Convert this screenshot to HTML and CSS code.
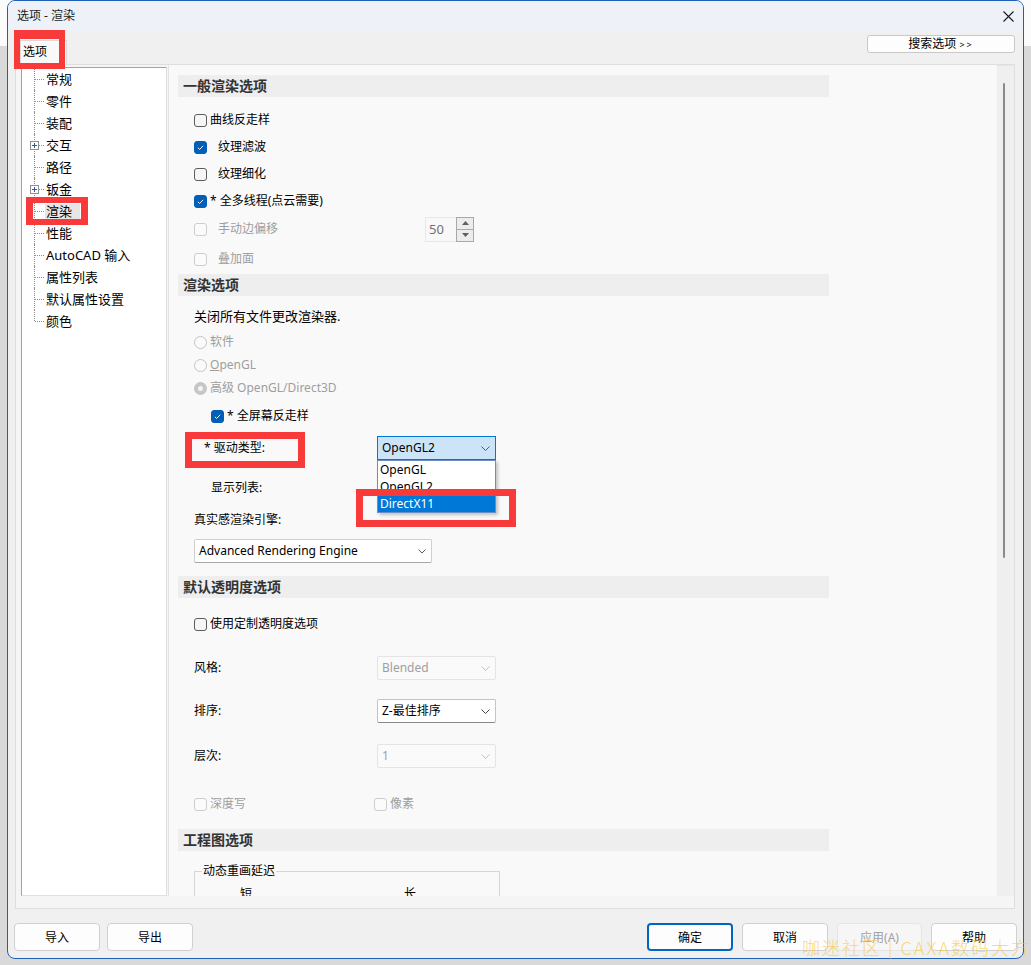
FILE: index.html
```html
<!DOCTYPE html>
<html lang="zh-CN">
<head>
<meta charset="utf-8">
<title>选项 - 渲染</title>
<link rel="stylesheet" href="styles.css">
</head>
<body>
<div class="dialog">
  <div class="titlebar">
    <span class="title">选项 - 渲染</span>
    <svg class="close" width="11" height="11" viewBox="0 0 11 11"><path d="M0.5 0.5 L10.5 10.5 M10.5 0.5 L0.5 10.5" stroke="#1b1b1b" stroke-width="1.1" fill="none"/></svg>
  </div>
  <div class="tabstrip">
    <div class="tab">选项</div>
    <button class="search-btn">搜索选项 <span class="gt">&gt;&gt;</span></button>
  </div>
  <div class="tabpage">
    <div class="tree">
      <ul>
        <li>常规</li>
        <li>零件</li>
        <li>装配</li>
        <li><svg class="exp" width="9" height="9" viewBox="0 0 9 9"><rect x="0.5" y="0.5" width="8" height="8" fill="#fff" stroke="#8f8f8f"/><path d="M2 4.5 H7 M4.5 2 V7" stroke="#2f5a96" stroke-width="1"/></svg>交互</li>
        <li>路径</li>
        <li><svg class="exp" width="9" height="9" viewBox="0 0 9 9"><rect x="0.5" y="0.5" width="8" height="8" fill="#fff" stroke="#8f8f8f"/><path d="M2 4.5 H7 M4.5 2 V7" stroke="#2f5a96" stroke-width="1"/></svg>钣金</li>
        <li><span class="sel">渲染</span></li>
        <li>性能</li>
        <li>AutoCAD 输入</li>
        <li>属性列表</li>
        <li>默认属性设置</li>
        <li>颜色</li>
      </ul>
    </div>
    <div class="content">
      <div class="scroll">
        <div class="sec-head first">一般渲染选项</div>
        <div class="row mt13"><span class="cb"></span><span class="lbl">曲线反走样</span></div>
        <div class="row mt7"><span class="cb on"><svg viewBox="0 0 13 13"><path d="M3.4 6.9 L5.5 8.8 L9.6 4.5" /></svg></span><span class="lbl-w">纹理滤波</span></div>
        <div class="row mt7"><span class="cb"></span><span class="lbl-w">纹理细化</span></div>
        <div class="row mt7"><span class="cb on"><svg viewBox="0 0 13 13"><path d="M3.4 6.9 L5.5 8.8 L9.6 4.5" /></svg></span><span class="lbl">* 全多线程(点云需要)</span></div>
        <div class="row tall mt5"><span class="cb dis"></span><span class="lbl-w dis w207">手动边偏移</span>
          <div class="spin">
            <div class="spin-val">50</div>
            <div class="spin-btns">
              <div class="spin-b"><svg width="7" height="4" viewBox="0 0 7 4"><path d="M0 4 L3.5 0 L7 4Z" fill="#5f5f5f"/></svg></div>
              <div class="spin-b"><svg width="7" height="4" viewBox="0 0 7 4"><path d="M0 0 L3.5 4 L7 0Z" fill="#5f5f5f"/></svg></div>
            </div>
          </div>
        </div>
        <div class="row mt7"><span class="cb dis"></span><span class="lbl-w dis">叠加面</span></div>

        <div class="sec-head mt5">渲染选项</div>
        <div class="row mt10"><span class="note">关闭所有文件更改渲染器.</span></div>
        <div class="row mt6"><span class="rb"></span><span class="lbl dis">软件</span></div>
        <div class="row mt3"><span class="rb"></span><span class="lbl dis"><u>O</u>penGL</span></div>
        <div class="row mt3"><span class="rb sel"></span><span class="lbl dis">高级 OpenGL/Direct3D</span></div>
        <div class="row ind42 mt8"><span class="cb on small"><svg viewBox="0 0 13 13"><path d="M3.4 6.9 L5.5 8.8 L9.6 4.5" /></svg></span><span class="lbl">* 全屏幕反走样</span></div>
        <div class="row tall24 ind35 mt10"><span class="w173">* 驱动类型:</span>
          <div class="dd open w119">OpenGL2<svg class="chev" width="9" height="5" viewBox="0 0 9 5"><path d="M0.5 0.5 L4.5 4.5 L8.5 0.5" stroke="#5a5a5a" fill="none"/></svg>
            <div class="dd-list">
              <div class="dd-item">OpenGL</div>
              <div class="dd-item">OpenGL2</div>
              <div class="dd-item hi">DirectX11</div>
            </div>
          </div>
        </div>
        <div class="row ind42 mt18"><span>显示列表:</span></div>
        <div class="row mt12"><span>真实感渲染引擎:</span></div>
        <div class="row tall24 mt9"><div class="dd w238">Advanced Rendering Engine<svg class="chev" width="8" height="5" viewBox="0 0 8 5"><path d="M0.5 0.5 L4 4 L7.5 0.5" stroke="#5a5a5a" fill="none"/></svg></div></div>

        <div class="sec-head mt13">默认透明度选项</div>
        <div class="row mt16"><span class="cb"></span><span class="lbl">使用定制透明度选项</span></div>
        <div class="row tall24 mt22"><span class="w183">风格:</span><div class="dd dis w119">Blended<svg class="chev" width="9" height="5" viewBox="0 0 9 5"><path d="M0.5 0.5 L4.5 4.5 L8.5 0.5" stroke="#c2c2c2" fill="none"/></svg></div></div>
        <div class="row tall24 mt19"><span class="w183">排序:</span><div class="dd w119 strong">Z-最佳排序<svg class="chev" width="9" height="5" viewBox="0 0 9 5"><path d="M0.5 0.5 L4.5 4.5 L8.5 0.5" stroke="#444" fill="none"/></svg></div></div>
        <div class="row tall24 mt21"><span class="w183">层次:</span><div class="dd dis w119">1<svg class="chev" width="9" height="5" viewBox="0 0 9 5"><path d="M0.5 0.5 L4.5 4.5 L8.5 0.5" stroke="#c2c2c2" fill="none"/></svg></div></div>
        <div class="row mt26"><span class="cb dis"></span><span class="lbl dis w167">深度写</span><span class="cb dis"></span><span class="lbl dis">像素</span></div>

        <div class="sec-head mt15">工程图选项</div>
        <fieldset class="group">
          <legend>动态重画延迟</legend>
          <div class="range"><span class="w164">短</span><span>长</span></div>
        </fieldset>
      </div>
      <div class="vscroll"><div class="thumb"></div></div>
    </div>
  </div>
  <div class="footer">
    <button class="btn">导入</button>
    <button class="btn gap7">导出</button>
    <button class="btn def">确定</button>
    <button class="btn gap9">取消</button>
    <button class="btn gap9 disabled w85">应用(A)</button>
    <button class="btn gap9">帮助</button>
  </div>
</div>

<div class="anno a1"></div>
<div class="anno a2"></div>
<div class="anno a3"></div>
<div class="anno a4"></div>
<div class="watermark">咖迷社区 | CAXA数码大方</div>
</body>
</html>
```
FILE: styles.css
```css
html, body {
  margin: 0;
  padding: 0;
}
body {
  width: 1031px;
  height: 965px;
  overflow: hidden;
  position: relative;
  background: linear-gradient(to bottom, #fbfbfb 0, #fbfbfb 46px, #d9d9d9 46px, #d9d9d9 100%);
  font-family: "Noto Sans", "Noto Sans CJK SC", sans-serif;
  font-size: 12px;
  color: #000;
}

.dialog {
  margin-left: 7px;
  width: 1017px;
  height: 959px;
  box-sizing: border-box;
  border: 1px solid #1d60b6;
  border-radius: 8px;
  overflow: hidden;
  background: #f0f0f0;
  display: flex;
  flex-direction: column;
}

.titlebar {
  height: 30px;
  flex: none;
  display: flex;
  align-items: center;
  padding-left: 9px;
  background: #eef2f8;
}
.title {
  font-size: 12px;
  color: #1a1a1a;
  line-height: 16px;
}
.close {
  margin-left: auto;
  margin-right: 9px;
  margin-top: 1px;
}

.tabstrip {
  height: 33px;
  flex: none;
  display: flex;
  align-items: flex-start;
}
.tab {
  position: relative;
  z-index: 1;
  margin-left: 12px;
  margin-top: 9px;
  width: 47px;
  height: 25px;
  box-sizing: border-box;
  border: 1px solid #d9d9d9;
  border-bottom: none;
  background: #f9f9f9;
  padding-left: 2px;
  line-height: 22px;
  font-size: 12px;
}
.search-btn {
  margin: 4px 8px 0 auto;
  width: 148px;
  height: 18px;
  box-sizing: border-box;
  border: 1px solid #c9c9c9;
  border-radius: 3px;
  background: #fdfdfd;
  font-family: inherit;
  font-size: 12px;
  line-height: 14px;
  padding: 0;
  color: #000;
}
.gt {
  font-size: 9px;
  letter-spacing: 2px;
}

.tabpage {
  flex: none;
  margin: 0 8px 0 7px;
  height: 845px;
  box-sizing: border-box;
  border: 1px solid #dedede;
  background: #f5f5f5;
  display: flex;
  align-items: flex-start;
  padding: 2px 0 0 5px;
}

.tree {
  width: 146px;
  height: 829px;
  flex: none;
  box-sizing: border-box;
  background: #fff;
  border: 1px solid;
  border-color: #a3a3a3 #e0e0e0 #e0e0e0 #a3a3a3;
}
.tree ul {
  list-style: none;
  margin: 0;
  padding: 0;
}
.tree li {
  position: relative;
  height: 22px;
  line-height: 22px;
  padding-left: 24px;
  font-size: 13px;
  white-space: nowrap;
}
.tree li::before {
  content: "";
  position: absolute;
  left: 12px;
  top: 0;
  bottom: 0;
  border-left: 1px dotted #8c8c8c;
}
.tree li:last-child::before {
  bottom: 11px;
}
.tree li::after {
  content: "";
  position: absolute;
  left: 13px;
  width: 9px;
  top: 11px;
  border-top: 1px dotted #8c8c8c;
}
.tree .exp {
  position: absolute;
  left: 8px;
  top: 7px;
  z-index: 1;
}
.tree .sel {
  display: inline-block;
  background: #e6e6e6;
  line-height: 15px;
  padding: 0 8px 0 1px;
  margin-left: -1px;
}

.content {
  flex: none;
  margin-left: 1px;
  margin-top: -2px;
  width: 846px;
  height: 831px;
  box-sizing: border-box;
  border-left: 1px solid #e3e3e3;
  background: #f9f9f9;
  display: flex;
  overflow: hidden;
}
.scroll {
  flex: 1;
  overflow: hidden;
  padding-top: 10px;
}
.vscroll {
  width: 18px;
  flex: none;
  box-sizing: border-box;
  background: #efefef;
  border-left: 1px solid #f6f6f6;
  border-top: 1px solid #e6e6e6;
}
.thumb {
  margin: 17px 0 0 6px;
  width: 2px;
  height: 475px;
  background: #8a8a8a;
  border-radius: 1px;
}

.sec-head {
  margin-left: 9px;
  width: 651px;
  height: 22px;
  box-sizing: border-box;
  padding-left: 5px;
  background: #eeeeee;
  font-size: 14px;
  font-weight: 700;
  line-height: 22px;
  color: #333;
}

.row {
  display: flex;
  align-items: center;
  height: 20px;
  padding-left: 25px;
  font-size: 12px;
  line-height: 16px;
  white-space: nowrap;
}
.row.tall { height: 26px; }
.row.tall24 { height: 24px; }
.ind42 { padding-left: 42px; }
.ind35 { padding-left: 35px; }

.mt3 { margin-top: 3px; }
.mt5 { margin-top: 5px; }
.mt6 { margin-top: 6px; }
.mt7 { margin-top: 7px; }
.mt8 { margin-top: 8px; }
.mt9 { margin-top: 9px; }
.mt10 { margin-top: 10px; }
.mt12 { margin-top: 12px; }
.mt13 { margin-top: 13px; }
.mt15 { margin-top: 15px; }
.mt16 { margin-top: 16px; }
.mt18 { margin-top: 18px; }
.mt19 { margin-top: 19px; }
.mt21 { margin-top: 21px; }
.mt22 { margin-top: 22px; }
.mt26 { margin-top: 26px; }

.w164 { display: inline-block; width: 164px; }
.w167 { display: inline-block; width: 164px; }
.w173 { display: inline-block; width: 173px; }
.w183 { display: inline-block; width: 183px; }
.w207 { display: inline-block; width: 207px; }
.w119 { width: 119px; }
.w238 { width: 238px; }

.lbl { margin-left: 3px; }
.lbl-w { margin-left: 11px; }
.lbl.w167 { width: 164px; }
.dis { color: #9e9e9e; }
.note { font-size: 13px; }

.cb {
  flex: none;
  width: 13px;
  height: 13px;
  box-sizing: border-box;
  border: 1px solid #5c5c5c;
  border-radius: 3px;
  background: #f6f6f6;
  display: inline-flex;
}
.cb.small {
  width: 13px;
  height: 13px;
}
.cb.on {
  background: #005fb8;
  border-color: #005fb8;
}
.cb.on svg {
  width: 11px;
  height: 11px;
}
.cb.on path {
  fill: none;
  stroke: #fff;
  stroke-width: 1.1;
}
.cb.dis {
  border-color: #cdcdcd;
  background: #fbfbfb;
}

.rb {
  flex: none;
  width: 13px;
  height: 13px;
  box-sizing: border-box;
  border: 1px solid #c4c4c4;
  border-radius: 50%;
  background: #fafafa;
}
.rb.sel {
  border: 4px solid #c6c6c6;
  background: #f4f4f4;
}

.dd {
  position: relative;
  display: flex;
  align-items: center;
  height: 24px;
  box-sizing: border-box;
  border: 1px solid #cfcfcf;
  border-bottom-color: #a8a8a8;
  background: #fff;
  padding-left: 4px;
  font-size: 12px;
  line-height: 16px;
  border-radius: 2px;
}
.dd .chev {
  margin-left: auto;
  margin-right: 5px;
}
.dd.open {
  background: #cce4f7;
  border-color: #0078d4;
  border-radius: 0;
}
.dd.strong {
  border-color: #c4c4c4;
  border-bottom-color: #8a8a8a;
}
.dd.dis {
  background: #fafafa;
  border-color: #e4e4e4;
  color: #9f9f9f;
}
.dd-list {
  position: absolute;
  left: -1px;
  top: 23px;
  width: 119px;
  box-sizing: border-box;
  border: 1px solid #6b8fc4;
  background: #fff;
  box-shadow: 2px 2px 3px rgba(0, 0, 0, 0.22);
  z-index: 2;
}
.dd-item {
  height: 17px;
  line-height: 17px;
  padding-left: 2px;
  color: #000;
}
.dd-item.hi {
  background: #0078d7;
  color: #fff;
}

.spin {
  display: flex;
  height: 25px;
  flex: none;
}
.spin-val {
  width: 31px;
  box-sizing: border-box;
  border: 1px solid #e8e8e8;
  border-right: none;
  background: #f8f8f8;
  padding-left: 3px;
  font-size: 13px;
  line-height: 23px;
  color: #707070;
}
.spin-btns {
  width: 18px;
  box-sizing: border-box;
  border: 1px solid #a9a9a9;
  display: flex;
  flex-direction: column;
  background: #a9a9a9;
  gap: 1px;
}
.spin-b {
  flex: 1;
  background: #ececec;
  display: flex;
  align-items: center;
  justify-content: center;
}

.group {
  margin: 12px 0 0 25px;
  width: 306px;
  box-sizing: border-box;
  border: 1px solid #d6d6d6;
  padding: 0;
  min-width: 0;
}
.group legend {
  margin-left: 7px;
  padding: 0 1px;
  font-size: 12px;
  line-height: 16px;
}
.range {
  margin-top: 7px;
  padding-left: 45px;
  font-size: 12px;
  line-height: 16px;
  height: 30px;
}

.footer {
  flex: 1;
  display: flex;
  align-items: flex-start;
  padding: 14px 6px 0 6px;
}
.btn {
  width: 86px;
  height: 28px;
  box-sizing: border-box;
  border: 1px solid #d0d0d0;
  border-radius: 4px;
  background: #fdfdfd;
  font-family: inherit;
  font-size: 12px;
  color: #000;
  padding: 0;
  flex: none;
}
.btn.gap7 { margin-left: 7px; }
.btn.gap9 { margin-left: 9px; }
.btn.w85 { width: 85px; }
.btn.def {
  margin-left: auto;
  border: 2px solid #0067c0;
}
.btn.disabled {
  background: #f6f6f6;
  border-color: #e5e5e5;
  color: #a2a2a2;
}

.anno {
  position: absolute;
  box-sizing: border-box;
  border: 7px solid #f83a3a;
  z-index: 5;
}
.a1 { left: 14px; top: 30px; width: 51px; height: 39px; border-width: 9px 6px 6px 6px; }
.a2 { left: 26px; top: 197px; width: 62px; height: 28px; border-width: 6px 7px; }
.a3 { left: 185px; top: 432px; width: 120px; height: 36px; }
.a4 { left: 356px; top: 489px; width: 160px; height: 38px; }

.watermark {
  position: absolute;
  left: 802px;
  top: 935px;
  font-family: "Noto Sans CJK SC", sans-serif;
  font-weight: 300;
  font-size: 18px;
  line-height: 24px;
  letter-spacing: 2px;
  color: rgba(246, 200, 60, 0.7);
  white-space: nowrap;
  z-index: 6;
}
```
